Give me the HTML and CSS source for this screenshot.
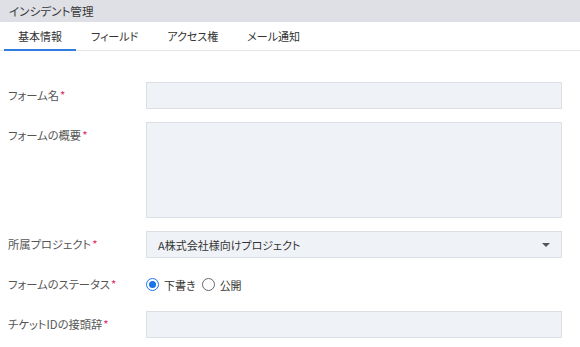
FILE: index.html
```html
<!DOCTYPE html>
<html lang="ja">
<head>
<meta charset="utf-8">
<link rel="stylesheet" href="styles.css">
</head>
<body>
<div class="titlebar">インシデント管理</div>
<nav class="tabs">
  <div class="tab active">基本情報</div>
  <div class="tab">フィールド</div>
  <div class="tab">アクセス権</div>
  <div class="tab">メール通知</div>
</nav>
<form class="form">
  <div class="row">
    <label class="label">フォーム名<span class="req">*</span></label>
    <div class="input"></div>
  </div>
  <div class="row">
    <label class="label">フォームの概要<span class="req">*</span></label>
    <div class="input textarea"></div>
  </div>
  <div class="row">
    <label class="label">所属プロジェクト<span class="req">*</span></label>
    <div class="input select">
      <span class="select-text">A株式会社様向けプロジェクト</span>
      <span class="caret"></span>
    </div>
  </div>
  <div class="row">
    <label class="label">フォームのステータス<span class="req">*</span></label>
    <div class="radios">
      <span class="radio checked"></span><span class="radio-label">下書き</span>
      <span class="radio"></span><span class="radio-label">公開</span>
    </div>
  </div>
  <div class="row">
    <label class="label">チケットIDの接頭辞<span class="req">*</span></label>
    <div class="input"></div>
  </div>
</form>
</body>
</html>
```
FILE: styles.css
```css
* { box-sizing: border-box; }
html, body {
  margin: 0;
  padding: 0;
  background: #fff;
  font-family: "Noto Sans CJK JP", "Noto Sans", sans-serif;
  font-feature-settings: "palt";
  color: #333;
}
.titlebar {
  height: 22px;
  line-height: 22px;
  padding-left: 9px;
  background: #dfe0e5;
  font-size: 11.6px;
  color: #3a3a3a;
}
.tabs {
  display: flex;
  padding-left: 4px;
  height: 29px;
  border-bottom: 1px solid #e6e7ea;
}
.tab {
  padding: 0 14px;
  font-size: 11px;
  line-height: 28px;
  color: #333;
  border-bottom: 2px solid transparent;
  margin-bottom: -1px;
}
.tab.active {
  border-bottom-color: #2f7de1;
}
.tab + .tab {
  margin-left: 1px;
}
.form {
  display: flex;
  flex-direction: column;
  gap: 13px;
  padding: 31px 18px 0 8px;
}
.row {
  display: flex;
  align-items: flex-start;
}
.label {
  width: 138px;
  flex: none;
  font-size: 11.3px;
  line-height: 27px;
  color: #555;
}
.req {
  color: #e0306a;
  margin-left: 1px;
}
.input {
  flex: 1;
  height: 27px;
  background: #eff2f6;
  border: 1px solid #dcdfe3;
}
.textarea {
  height: 96px;
}
.select {
  display: flex;
  align-items: center;
  justify-content: space-between;
  padding: 0 11px 0 11px;
}
.select-text {
  font-size: 11px;
  color: #333;
}
.caret {
  width: 0;
  height: 0;
  border-left: 4px solid transparent;
  border-right: 4px solid transparent;
  border-top: 4px solid #555;
}
.radios {
  display: flex;
  align-items: center;
  height: 27px;
}
.radio {
  width: 13px;
  height: 13px;
  border-radius: 50%;
  border: 1px solid #666;
  background: #fff;
  margin-right: 5px;
  position: relative;
}
.radio.checked {
  border-color: #1a73e8;
}
.radio.checked::after {
  content: "";
  position: absolute;
  left: 2px;
  top: 2px;
  width: 7px;
  height: 7px;
  border-radius: 50%;
  background: #1a73e8;
}
.radio-label {
  font-size: 11px;
  color: #333;
  margin-right: 6px;
}
```
